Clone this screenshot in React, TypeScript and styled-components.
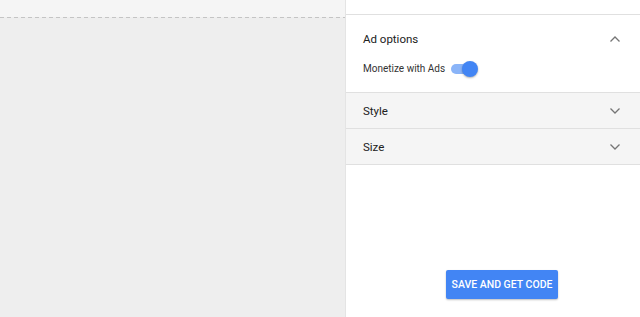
import React from 'react'
import styled, { createGlobalStyle } from 'styled-components'

const GlobalStyle = createGlobalStyle`
  html, body {
    margin: 0;
    padding: 0;
    height: 100%;
    overflow: hidden;
  }
  body {
    font-family: Roboto, 'Liberation Sans', Arial, sans-serif;
    color: #212121;
  }
  #root {
    height: 100%;
  }
`

const Page = styled.div`
  display: flex;
  height: 317px;
  width: 640px;
`

const Preview = styled.div`
  width: 345px;
  background: #eeeeee;
  display: flex;
  flex-direction: column;
`

const PreviewTop = styled.div`
  height: 17px;
  background: #f5f5f5;
`

const DashedRule = styled.div`
  height: 1px;
  background: repeating-linear-gradient(to right, #c4c4c4 0 4px, transparent 4px 7px);
`

const Sidebar = styled.aside`
  flex: 1;
  display: flex;
  flex-direction: column;
  background: #fff;
  border-left: 1px solid #e4e4e4;
`

const SidebarTop = styled.div`
  height: 14px;
  border-bottom: 1px solid #e0e0e0;
`

const Section = styled.section<{ $open?: boolean }>`
  background: ${(p) => (p.$open ? '#fff' : '#f5f5f5')};
  border-bottom: 1px solid #e0e0e0;
  padding: 0 17px;
`

const SectionHead = styled.div<{ $open?: boolean }>`
  display: flex;
  align-items: center;
  justify-content: space-between;
  height: ${(p) => (p.$open ? '48px' : '35px')};
  font-size: 11.5px;
  color: #212121;
`

const SectionBody = styled.div`
  padding: 0 0 18px;
  display: flex;
  align-items: center;
  gap: 6px;
  font-size: 10px;
  color: #333;
`

const Toggle = styled.span`
  position: relative;
  width: 24px;
  height: 10px;
  border-radius: 5px;
  background: #8ab4f8;

  &::after {
    content: '';
    position: absolute;
    right: -3px;
    top: -3px;
    width: 16px;
    height: 16px;
    border-radius: 50%;
    background: #4285f4;
    box-shadow: 0 1px 2px rgba(0, 0, 0, 0.3);
  }
`

const Spacer = styled.div`
  flex: 1;
  display: flex;
  align-items: flex-end;
  justify-content: center;
  padding-bottom: 18px;
`

const SaveButton = styled.button`
  border: none;
  background: #4285f4;
  color: #fff;
  font-family: Roboto, 'Liberation Sans', Arial, sans-serif;
  font-weight: 500;
  font-size: 10.5px;
  height: 29px;
  padding: 0 6px;
  border-radius: 2px;
  box-shadow: 0 1px 2px rgba(0, 0, 0, 0.25);
  margin-left: 18px;
`

const Chevron = ({ up }: { up?: boolean }) => (
  <svg width="12" height="8" viewBox="0 0 12 8" style={{ marginRight: 2 }}>
    <path
      d={up ? 'M1.5 6.5 L6 2 L10.5 6.5' : 'M1.5 1.5 L6 6 L10.5 1.5'}
      fill="none"
      stroke="#757575"
      strokeWidth="1.3"
    />
  </svg>
)

export default function App() {
  return (
    <Page>
      <GlobalStyle />
      <Preview>
        <PreviewTop />
        <DashedRule />
      </Preview>
      <Sidebar>
        <SidebarTop />
        <Section $open>
          <SectionHead $open>
            Ad options
            <Chevron up />
          </SectionHead>
          <SectionBody>
            Monetize with Ads
            <Toggle />
          </SectionBody>
        </Section>
        <Section>
          <SectionHead>
            Style
            <Chevron />
          </SectionHead>
        </Section>
        <Section>
          <SectionHead>
            Size
            <Chevron />
          </SectionHead>
        </Section>
        <Spacer>
          <SaveButton>SAVE AND GET CODE</SaveButton>
        </Spacer>
      </Sidebar>
    </Page>
  )
}
